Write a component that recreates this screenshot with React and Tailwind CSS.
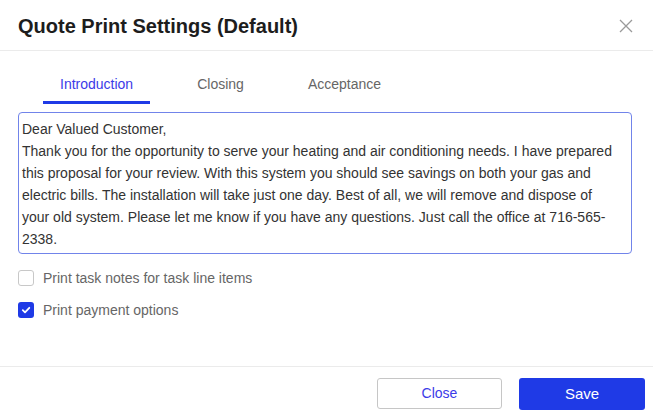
import React from "react";

export default function App() {
  return (
    <div className="w-[653px] h-[417px] bg-white flex flex-col overflow-hidden" style={{ fontFamily: '"Liberation Sans", Arial, sans-serif' }}>
      <div className="h-[51px] shrink-0 border-b border-[#ebebeb] flex items-center justify-between pl-[18px] pr-[20px]">
        <div className="text-[20px] font-bold text-[#1d1d1d] leading-none mt-[2px]">Quote Print Settings (Default)</div>
        <svg width="14" height="14" viewBox="0 0 14 14" className="mt-[1px]">
          <path d="M1 1L13 13M13 1L1 13" stroke="#9a9a9a" strokeWidth="1.3" />
        </svg>
      </div>
      <div className="flex-1 flex flex-col">
        <div className="flex pl-[43px] pt-[23px]">
          <div className="px-[17px] text-[14px] leading-[20px] text-[#3b3be8] pb-[7px] border-b-[3px] border-[#1f3ae6]">Introduction</div>
          <div className="ml-[30px] px-[17px] text-[14px] leading-[20px] text-[#666666] pb-[7px] border-b-[3px] border-transparent">Closing</div>
          <div className="ml-[30px] px-[17px] text-[14px] leading-[20px] text-[#666666] pb-[7px] border-b-[3px] border-transparent">Acceptance</div>
        </div>
        <div className="ml-[18px] mt-[8px] w-[614px] h-[142px] border border-[#7184ea] rounded-[4px] pl-[3px] pr-[11px] pt-[5px] text-[14px] leading-[22px] text-[#333333]">
          Dear Valued Customer,<br />
          Thank you for the opportunity to serve your heating and air conditioning needs. I have prepared this proposal for your review. With this system you should see savings on both your gas and electric bills. The installation will take just one day. Best of all, we will remove and dispose of your old system. Please let me know if you have any questions. Just call the office at 716-565-2338.
        </div>
        <div className="ml-[18px] mt-[16px] flex flex-col gap-[16px]">
          <div className="flex items-center h-[16px]">
            <div className="w-[16px] h-[16px] rounded-[3px] border border-[#c8c8c8] bg-white" />
            <span className="ml-[9px] text-[14px] text-[#666666] leading-[16px]">Print task notes for task line items</span>
          </div>
          <div className="flex items-center h-[16px]">
            <div className="w-[16px] h-[16px] rounded-[3px] bg-[#1f3ae6] flex items-center justify-center">
              <svg width="10" height="10" viewBox="0 0 10 10">
                <path d="M1.8 5.2L4 7.3L8.3 2.8" fill="none" stroke="white" strokeWidth="1.8" strokeLinecap="round" strokeLinejoin="round" />
              </svg>
            </div>
            <span className="ml-[9px] text-[14px] text-[#666666] leading-[16px]">Print payment options</span>
          </div>
        </div>
      </div>
      <div className="h-[51px] shrink-0 border-t border-[#ebebeb] flex items-start justify-end pt-[11px] pr-[8px] gap-[17px]">
        <button className="w-[125px] h-[31px] border border-[#c6c6c6] rounded-[3px] bg-white text-[14px] text-[#3b3be8]">Close</button>
        <button className="w-[126px] h-[32px] rounded-[3px] bg-[#1f3ae6] text-[15px] text-white">Save</button>
      </div>
    </div>
  );
}
